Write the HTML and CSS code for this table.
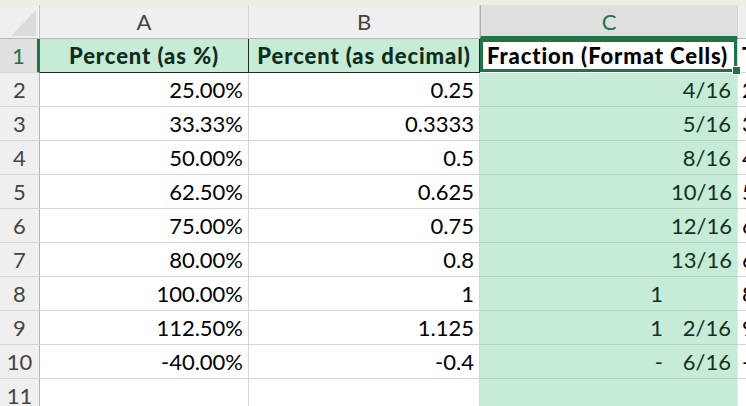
FILE: index.html
```html
<!DOCTYPE html>
<html>
<head>
<meta charset="utf-8">
<link rel="stylesheet" href="styles.css">
</head>
<body>
<div class="topbar"></div>
<div class="sheet">
  <div class="corner"><svg width="40" height="34" viewBox="0 0 40 34"><polygon points="36,5 36,31 11,31" fill="#dbdbdb"/></svg></div>
  <div class="colhead">A</div>
  <div class="colhead">B</div>
  <div class="colhead sel">C</div>
  <div class="colhead last"></div>

  <div class="rowhead sel">1</div>
  <div class="cell hdr">Percent (as %)</div>
  <div class="cell hdr">Percent (as decimal)</div>
  <div class="cell active">Fraction (Format Cells)<span class="handle"></span></div>
  <div class="cell d bold">Text</div>

  <div class="rowhead">2</div><div class="cell num">25.00%</div><div class="cell num">0.25</div><div class="cell frac"><span class="int"></span><span class="fr">4/16</span></div><div class="cell d">2</div>
  <div class="rowhead">3</div><div class="cell num">33.33%</div><div class="cell num">0.3333</div><div class="cell frac"><span class="int"></span><span class="fr">5/16</span></div><div class="cell d">3</div>
  <div class="rowhead">4</div><div class="cell num">50.00%</div><div class="cell num">0.5</div><div class="cell frac"><span class="int"></span><span class="fr">8/16</span></div><div class="cell d">4</div>
  <div class="rowhead">5</div><div class="cell num">62.50%</div><div class="cell num">0.625</div><div class="cell frac"><span class="int"></span><span class="fr">10/16</span></div><div class="cell d">5</div>
  <div class="rowhead">6</div><div class="cell num">75.00%</div><div class="cell num">0.75</div><div class="cell frac"><span class="int"></span><span class="fr">12/16</span></div><div class="cell d">6</div>
  <div class="rowhead">7</div><div class="cell num">80.00%</div><div class="cell num">0.8</div><div class="cell frac"><span class="int"></span><span class="fr">13/16</span></div><div class="cell d">6</div>
  <div class="rowhead">8</div><div class="cell num">100.00%</div><div class="cell num">1</div><div class="cell frac"><span class="int">1</span><span class="fr"></span></div><div class="cell d">8</div>
  <div class="rowhead">9</div><div class="cell num">112.50%</div><div class="cell num">1.125</div><div class="cell frac"><span class="int">1</span><span class="fr">2/16</span></div><div class="cell d">9</div>
  <div class="rowhead">10</div><div class="cell num">-40.00%</div><div class="cell num">-0.4</div><div class="cell frac"><span class="int">-</span><span class="fr">6/16</span></div><div class="cell d">-</div>
  <div class="rowhead">11</div><div class="cell"></div><div class="cell"></div><div class="cell frac"></div><div class="cell d"></div>
</div>
</body>
</html>
```

FILE: styles.css
```css
html, body {
  margin: 0;
  padding: 0;
}
body {
  width: 746px;
  height: 406px;
  overflow: hidden;
  background: #ffffff;
  font-family: Lato, "Open Sans", sans-serif;
  font-size: 22px;
  color: #000;
}
.topbar {
  height: 5px;
  background: #e9f0e2;
}
.sheet {
  display: grid;
  grid-template-columns: 40px 209px 231px 258px 60px;
  grid-auto-rows: 34px;
}
.sheet > div {
  box-sizing: border-box;
  line-height: 34px;
  white-space: nowrap;
  overflow: hidden;
}
.corner {
  background: #efefef;
  border-right: 1px solid #c4c4c4;
  border-bottom: 1px solid #b8b8b8;
}
.corner svg {
  display: block;
}
.colhead {
  background: #efefef;
  color: #444;
  text-align: center;
  border-right: 1px solid #d6d6d6;
  border-bottom: 1px solid #b8b8b8;
  line-height: 33px !important;
}
.colhead.sel {
  background: #dfdfdf;
  color: #217346;
  border-bottom: 3px solid #217346;
  border-left: 1px solid #b0b0b0;
  line-height: 33px !important;
}
.colhead.last {
  border-right: none;
}
.rowhead {
  background: #efefef;
  color: #444;
  text-align: center;
  border-right: 1px solid #b3b3b3;
  border-bottom: 1px solid #d6d6d6;
}
.rowhead.sel {
  background: #e0e0e0;
  color: #217346;
  border-right: 3px solid #217346;
}
.cell {
  border-right: 1px solid #d6d6d6;
  border-bottom: 1px solid #d6d6d6;
  padding: 0 5px;
}
.cell.num {
  text-align: right;
}
.cell.hdr {
  background: #c6ebd6;
  color: #0f2d1b;
  font-weight: 900;
  letter-spacing: 0.9px;
  text-align: center;
  padding: 0;
  border-right: 1px solid #1e2a22;
  border-bottom: 1px solid #1e2a22;
}
.cell.active {
  position: relative;
  background: #ffffff;
  font-weight: 900;
  letter-spacing: 0.9px;
  text-align: center;
  padding: 0 2px 0 0;
  border-bottom: 1px solid #ffffff;
  box-shadow: inset 0 0 0 3px #217346;
  overflow: visible !important;
}
.handle {
  position: absolute;
  right: -4px;
  bottom: -3px;
  width: 7px;
  height: 7px;
  background: #217346;
  border: 1px solid #ffffff;
}
.cell.frac {
  background: #c6ebd6;
  color: #12311f;
  border-bottom: 1px solid #aed6c0;
  border-right: 1px solid #e6e6e6;
  display: flex;
  justify-content: flex-end;
  padding: 0 6px 0 0;
}
.frac .int {
  text-align: right;
}
.frac .fr {
  width: 60px;
  margin-left: 8px;
  text-align: right;
}
.cell.d {
  border-right: none;
  padding-left: 4px;
}
.cell.bold {
  font-weight: 900;
}
```
